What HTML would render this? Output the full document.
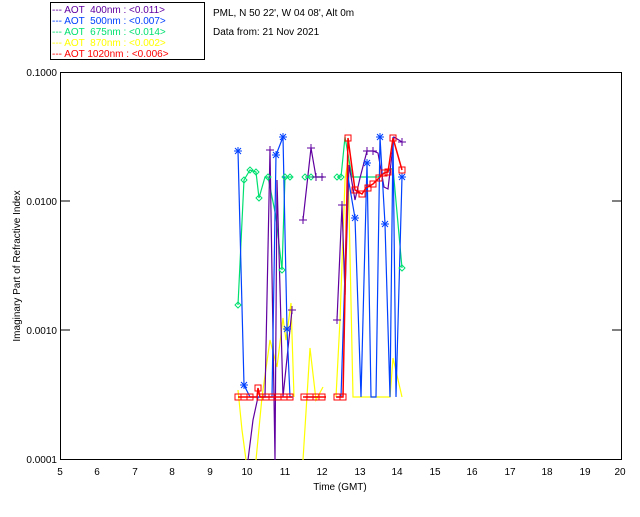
<!DOCTYPE html>
<html><head><style>
body{margin:0;background:#fff;width:640px;height:512px;overflow:hidden;font-family:"Liberation Sans",sans-serif}
svg text{font-family:"Liberation Sans",sans-serif;font-size:10px}
</style></head><body>
<svg width="640" height="512" xmlns="http://www.w3.org/2000/svg">
<defs>
<path id="dm" d="M0,-3 L3,0 L0,3 L-3,0 Z" fill="none" stroke="#00e070"/>
<path id="pl" d="M-4,0 H4 M0,-4 V4" stroke="#6000a0"/>
<path id="as" d="M-4,0 H4 M0,-4 V4 M-3,-3 L3,3 M-3,3 L3,-3" stroke="#0040ff"/>
</defs>
<rect x="50.5" y="2.5" width="154" height="57" fill="none" stroke="#000"/>
<g font-size="10">
<text x="52" y="13" fill="#6000a0">--- AOT &#160;400nm : &lt;0.011&gt;</text>
<text x="52" y="24" fill="#0040ff">--- AOT &#160;500nm : &lt;0.007&gt;</text>
<text x="52" y="35" fill="#00e070">--- AOT &#160;675nm : &lt;0.014&gt;</text>
<text x="52" y="46" fill="#ffff00">--- AOT &#160;870nm : &lt;0.002&gt;</text>
<text x="52" y="57" fill="#ff0000">--- AOT 1020nm : &lt;0.006&gt;</text>
<text x="213" y="16" fill="#000">PML, N 50 22', W 04 08', Alt 0m</text>
<text x="213" y="35" fill="#000">Data from: 21 Nov 2021</text>
</g>
<rect x="60.5" y="72.5" width="561" height="387" fill="none" stroke="#000"/>
<g stroke="#000">
<line x1="60" y1="201" x2="70" y2="201"/><line x1="612" y1="201" x2="622" y2="201"/>
<line x1="60" y1="330" x2="70" y2="330"/><line x1="612" y1="330" x2="622" y2="330"/>
</g>
<g font-size="10" fill="#000" text-anchor="end">
<text x="57" y="76">0.1000</text><text x="57" y="205">0.0100</text><text x="57" y="334">0.0010</text><text x="57" y="463">0.0001</text>
</g>
<g font-size="10" fill="#000" text-anchor="middle">
<text x="60" y="475">5</text><text x="97" y="475">6</text><text x="135" y="475">7</text><text x="172" y="475">8</text><text x="210" y="475">9</text><text x="247" y="475">10</text><text x="285" y="475">11</text><text x="322" y="475">12</text><text x="360" y="475">13</text><text x="397" y="475">14</text><text x="435" y="475">15</text><text x="472" y="475">16</text><text x="510" y="475">17</text><text x="547" y="475">18</text><text x="585" y="475">19</text><text x="620" y="475">20</text>
<text x="340" y="490">Time (GMT)</text>
<text transform="translate(20,266) rotate(-90)">Imaginary Part of Refractive Index</text>
</g>
<g fill="none" stroke-width="1.2">
<polyline stroke="#ffff00" points="238,390 242,430 246,460"/>
<polyline stroke="#ffff00" points="256,460 262,397 270,340 277,367 283,318 286,340 291,303 294,397"/>
<polyline stroke="#ffff00" points="303,460 310,348 316,400 323,387"/>
<polyline stroke="#ffff00" points="336,397 340,320 345,180 348,160 353,397 390,397 393,358 402,397"/>
<polyline stroke="#00e070" points="238,305 244,180 250,170 256,172 259,198 265,177 268,177 276,217 282,270 285,177 292,177"/>
<polyline stroke="#00e070" points="305,177 323,177"/>
<polyline stroke="#00e070" points="337,177 341,177 345,137 352,177 368,177 378,177 393,168 402,268"/>
<polyline stroke="#6000a0" points="248,460 253,420 258,397 265,397 270,150 275,460 277,180 283,397 292,310"/>
<polyline stroke="#6000a0" points="303,220 311,148 316,177 324,177"/>
<polyline stroke="#6000a0" points="337,320 342,205 345,295 349,165 355,200 360,178 367,151 373,151 378,153 384,187 388,189 394,137 402,142"/>
<polyline stroke="#0040ff" points="238,151 244,385 250,397 272,397 276,155 283,137 287,329 290,397 293,397"/>
<polyline stroke="#0040ff" points="305,397 318,397"/>
<polyline stroke="#0040ff" points="337,397 341,397 348,177 355,218 361,397 367,163 371,397 376,397 380,137 385,224 390,397 393,137 396,397 402,177"/>
<polyline stroke="#ff0000" stroke-width="1.5" points="238,397 257,397 258,388 260,397 292,397"/>
<polyline stroke="#ff0000" stroke-width="1.5" points="303,397 326,397"/>
<polyline stroke="#ff0000" stroke-width="1.5" points="336,397 343,397 348,138 355,190 362,194 366,188 373,184 379,178 384,173 388,172 393,138 402,170"/>
</g>
<g>
<use href="#dm" x="238" y="305"/><use href="#dm" x="244" y="180"/><use href="#dm" x="250" y="170"/><use href="#dm" x="256" y="172"/><use href="#dm" x="259" y="198"/><use href="#dm" x="268" y="177"/><use href="#dm" x="282" y="270"/><use href="#dm" x="285" y="177"/><use href="#dm" x="290" y="177"/><use href="#dm" x="305" y="177"/><use href="#dm" x="311" y="177"/><use href="#dm" x="337" y="177"/><use href="#dm" x="341" y="177"/><use href="#dm" x="402" y="268"/>
<use href="#pl" x="270" y="150"/><use href="#pl" x="292" y="310"/><use href="#pl" x="303" y="220"/><use href="#pl" x="311" y="148"/><use href="#pl" x="316" y="177"/><use href="#pl" x="322" y="177"/><use href="#pl" x="337" y="320"/><use href="#pl" x="342" y="205"/><use href="#pl" x="367" y="151"/><use href="#pl" x="373" y="151"/><use href="#pl" x="402" y="142"/>
<use href="#as" x="238" y="151"/><use href="#as" x="244" y="385"/><use href="#as" x="276" y="155"/><use href="#as" x="283" y="137"/><use href="#as" x="287" y="329"/><use href="#as" x="355" y="218"/><use href="#as" x="367" y="163"/><use href="#as" x="380" y="137"/><use href="#as" x="385" y="224"/><use href="#as" x="402" y="177"/>
</g>
<g fill="none" stroke="#ff0000">
<rect x="235" y="394" width="6" height="6"/><rect x="241" y="394" width="6" height="6"/><rect x="247" y="394" width="6" height="6"/><rect x="255" y="385" width="6" height="6"/><rect x="257" y="394" width="6" height="6"/><rect x="263" y="394" width="6" height="6"/><rect x="269" y="394" width="6" height="6"/><rect x="275" y="394" width="6" height="6"/><rect x="281" y="394" width="6" height="6"/><rect x="287" y="394" width="6" height="6"/>
<rect x="301" y="394" width="6" height="6"/><rect x="307" y="394" width="6" height="6"/><rect x="313" y="394" width="6" height="6"/><rect x="319" y="394" width="6" height="6"/><rect x="334" y="394" width="6" height="6"/><rect x="340" y="394" width="6" height="6"/>
<rect x="345" y="135" width="6" height="6"/><rect x="352" y="187" width="6" height="6"/><rect x="359" y="191" width="6" height="6"/><rect x="365" y="185" width="6" height="6"/><rect x="370" y="181" width="6" height="6"/><rect x="376" y="175" width="6" height="6"/><rect x="381" y="170" width="6" height="6"/><rect x="385" y="169" width="6" height="6"/><rect x="390" y="135" width="6" height="6"/><rect x="399" y="167" width="6" height="6"/>
</g>
</svg>
</body></html>
